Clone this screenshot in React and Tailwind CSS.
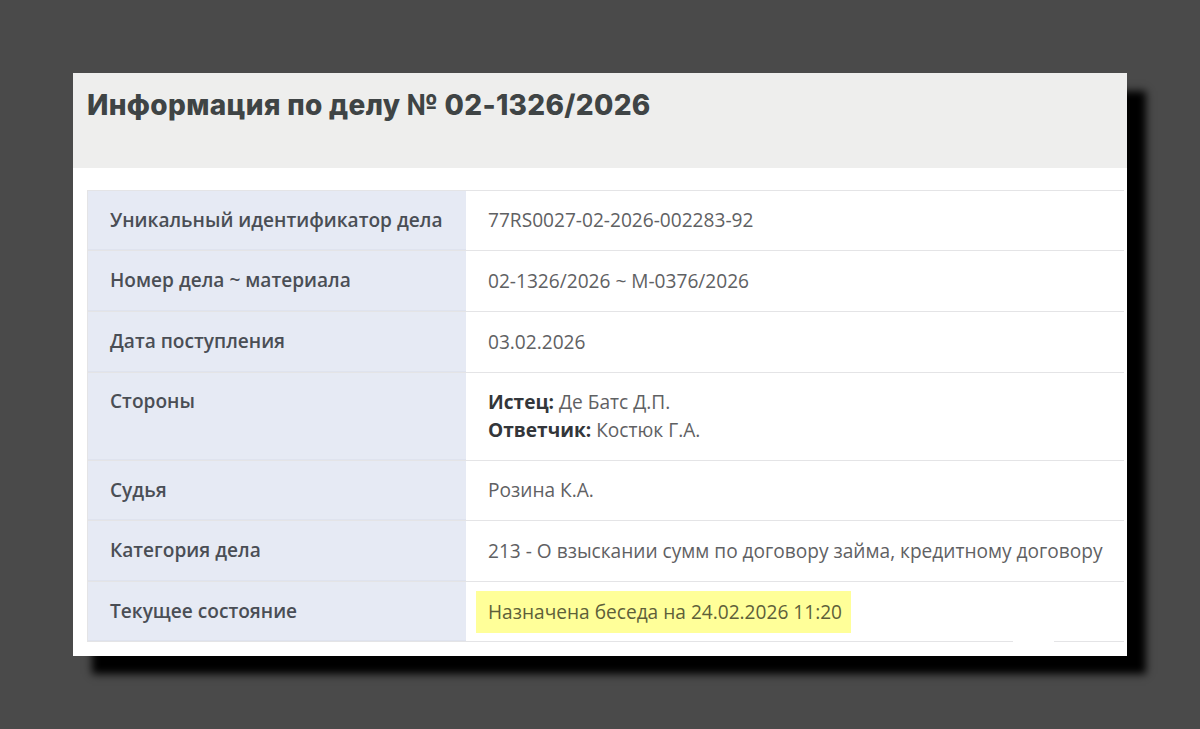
const rows = [
  { label: 'Уникальный идентификатор дела', value: '77RS0027-02-2026-002283-92', h: 'h-[60px]' },
  { label: 'Номер дела ~ материала', value: '02-1326/2026 ~ М-0376/2026', h: 'h-[61px]' },
  { label: 'Дата поступления', value: '03.02.2026', h: 'h-[61px]' },
  {
    label: 'Стороны',
    h: 'h-[88px]',
    value: (
      <>
        <div className="leading-[28px]"><b className="font-bold text-[#33363a]">Истец:</b> Де Батс Д.П.</div>
        <div className="leading-[28px]"><b className="font-bold text-[#33363a]">Ответчик:</b> Костюк Г.А.</div>
      </>
    ),
    top: true,
  },
  { label: 'Судья', value: 'Розина К.А.', h: 'h-[60px]' },
  { label: 'Категория дела', value: '213 - О взыскании сумм по договору займа, кредитному договору', h: 'h-[61px]' },
  {
    label: 'Текущее состояние',
    h: 'h-[60px]',
    value: (
      <span className="-ml-[12px] inline-block h-[42px] bg-[#ffff99] pl-[12px] pr-[9px] leading-[42px] text-[#5e5f3a]">
        Назначена беседа на 24.02.2026 11:20
      </span>
    ),
  },
]

const App = () => {
  return (
    <div className="flex h-[729px] w-[1200px] justify-center overflow-hidden bg-[#4a4a4a] pt-[73px] font-['Open_Sans',sans-serif]">
      <div className="h-[583px] w-[1054px] bg-white shadow-[19px_18px_8px_#000]">
        <div className="h-[95px] bg-[#eeeeed] pl-[14px] pt-[11px]">
          <h1 className="font-['Inter',sans-serif] text-[28px] leading-[42px] font-extrabold tracking-[0.32px] text-[#3f4445]">
            Информация по делу № 02-1326/2026
          </h1>
        </div>
        <div className="relative mt-[22px] ml-[14px] mr-[3px] border-t border-l border-[#e4e4e6]">
          {rows.map((row) => (
            <div key={row.label} className={`flex border-b border-[#e4e4e6] ${row.h}`}>
              <div className={`flex w-[378px] shrink-0 border-b border-[#dfe3ee] bg-[#e6eaf4] pl-[22px] text-[19.1px] font-semibold text-[#4a4e55] ${row.top ? 'items-start pt-[14px]' : 'items-center'}`}>
                {row.label}
              </div>
              <div className={`pl-[22px] text-[19.12px] text-[#5f6163] ${row.top ? 'pt-[15px]' : 'flex items-center'}`}>
                <div>{row.value}</div>
              </div>
            </div>
          ))}
          {/* gap in the bottom rule */}
          <div className="absolute -bottom-px right-[70px] h-[2px] w-[41px] bg-white" />
        </div>
      </div>
    </div>
  )
}

export default App
